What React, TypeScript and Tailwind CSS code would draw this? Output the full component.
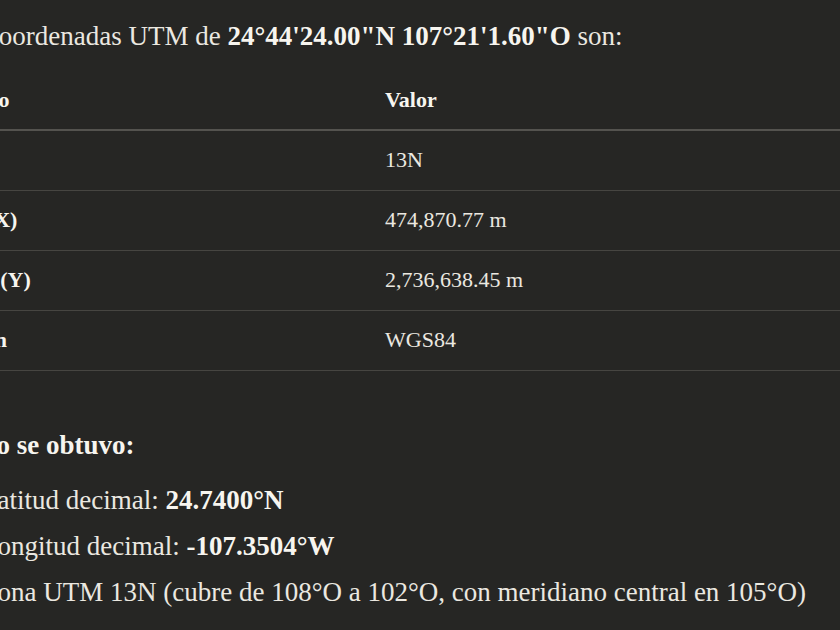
import React from "react";

const rows = [
  { k: "Zona", v: "13N" },
  { k: "Este (X)", v: "474,870.77 m" },
  { k: "Norte (Y)", v: "2,736,638.45 m" },
  { k: "Región", v: "WGS84" },
];

export default function App() {
  return (
    <div
      className="w-[840px] h-[630px] overflow-hidden bg-[#262624] text-[#ebe8e0]"
      style={{ fontFamily: '"Liberation Serif", "DejaVu Serif", serif' }}
    >
      <div className="ml-[-59px] w-[960px] pt-[16px] text-[27px] leading-[40px]">
        <p>
          Las coordenadas UTM de <strong className="font-bold text-[#f7f5ef]">24°44'24.00"N 107°21'1.60"O</strong> son:
        </p>
        <table className="mt-[14px] border-collapse text-[22px]">
          <thead>
            <tr className="border-b-2 border-[#54534f]">
              <th className="w-[444px] h-[60px] p-0 text-left font-bold text-[#f7f5ef] align-middle">Campo</th>
              <th className="w-[500px] h-[60px] p-0 text-left font-bold text-[#f7f5ef] align-middle">Valor</th>
            </tr>
          </thead>
          <tbody>
            {rows.map((r) => (
              <tr key={r.k} className="border-b border-[#464541]">
                <td className="h-[60px] p-0 font-bold text-[#f7f5ef] align-middle">{r.k}</td>
                <td className="h-[60px] p-0 align-middle">{r.v}</td>
              </tr>
            ))}
          </tbody>
        </table>
        <p className="mt-[54px] font-bold text-[#f7f5ef]">Cómo se obtuvo:</p>
        <ul className="mt-[15px] pl-[40px] list-disc flex flex-col gap-[6px]">
          <li>
            Latitud decimal: <strong className="font-bold text-[#f7f5ef]">24.7400°N</strong>
          </li>
          <li>
            Longitud decimal: <strong className="font-bold text-[#f7f5ef]">-107.3504°W</strong>
          </li>
          <li>Zona UTM 13N (cubre de 108°O a 102°O, con meridiano central en 105°O)</li>
        </ul>
      </div>
    </div>
  );
}
